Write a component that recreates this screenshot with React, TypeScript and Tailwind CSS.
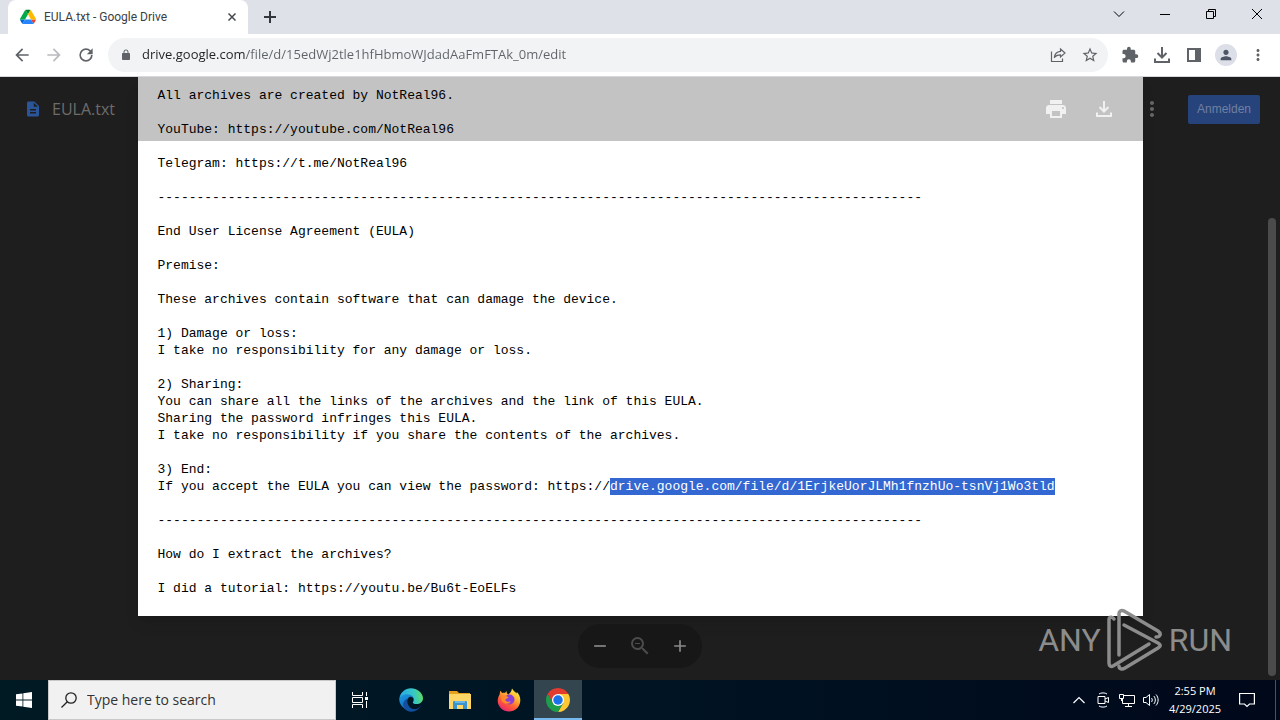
import type { ReactNode } from 'react'

const RULE = '-'.repeat(98)

const SELECTED = 'drive.google.com/file/d/1ErjkeUorJLMh1fnzhUo-tsnVj1Wo3tld'

interface Line { text: string; selected?: string }

const LINES: Line[] = [
  { text: 'All archives are created by NotReal96.' },
  { text: '' },
  { text: 'YouTube: https://youtube.com/NotReal96' },
  { text: '' },
  { text: 'Telegram: https://t.me/NotReal96' },
  { text: '' },
  { text: RULE },
  { text: '' },
  { text: 'End User License Agreement (EULA)' },
  { text: '' },
  { text: 'Premise:' },
  { text: '' },
  { text: 'These archives contain software that can damage the device.' },
  { text: '' },
  { text: '1) Damage or loss:' },
  { text: 'I take no responsibility for any damage or loss.' },
  { text: '' },
  { text: '2) Sharing:' },
  { text: 'You can share all the links of the archives and the link of this EULA.' },
  { text: 'Sharing the password infringes this EULA.' },
  { text: 'I take no responsibility if you share the contents of the archives.' },
  { text: '' },
  { text: '3) End:' },
  { text: 'If you accept the EULA you can view the password: https://', selected: SELECTED },
  { text: '' },
  { text: RULE },
  { text: '' },
  { text: 'How do I extract the archives?' },
  { text: '' },
  { text: 'I did a tutorial: https://youtu.be/Bu6t-EoELFs' },
]

interface IconProps { d: string; className?: string }

// Filled 24-unit material glyph
function Glyph({ d, className = 'size-5' }: IconProps) {
  return <svg className={className} viewBox="0 0 24 24" fill="currentColor"><path d={d} /></svg>
}

const PATHS = {
  back: 'M20 11H7.83l5.59-5.59L12 4l-8 8 8 8 1.41-1.41L7.83 13H20v-2z',
  forward: 'M12 4l-1.41 1.41L16.17 11H4v2h12.17l-5.58 5.59L12 20l8-8z',
  reload: 'M17.65 6.35A7.96 7.96 0 0012 4a8 8 0 108 8h-2a6 6 0 11-1.76-4.24L13 11h7V4l-2.35 2.35z',
  lock: 'M18 8h-1V6c0-2.76-2.24-5-5-5S7 3.24 7 6v2H6c-1.1 0-2 .9-2 2v10c0 1.1.9 2 2 2h12c1.1 0 2-.9 2-2V10c0-1.1-.9-2-2-2zM9 6c0-1.66 1.34-3 3-3s3 1.34 3 3v2H9V6z',
  star: 'M22 9.24l-7.19-.62L12 2 9.19 8.63 2 9.24l5.46 4.73L5.82 21 12 17.27 18.18 21l-1.63-7.03L22 9.24zM12 15.4l-3.76 2.27 1-4.28-3.32-2.88 4.38-.38L12 6.1l1.71 4.04 4.38.38-3.32 2.88 1 4.28L12 15.4z',
  puzzle: 'M20.5 11H19V7c0-1.1-.9-2-2-2h-4V3.5a2.5 2.5 0 00-5 0V5H4c-1.1 0-1.99.9-1.99 2v3.8H3.5a2.7 2.7 0 010 5.4H2V20c0 1.1.9 2 2 2h3.8v-1.5a2.7 2.7 0 015.4 0V22H17c1.1 0 2-.9 2-2v-4h1.5a2.5 2.5 0 000-5z',
  person: 'M12 12c2.21 0 4-1.79 4-4s-1.79-4-4-4-4 1.79-4 4 1.79 4 4 4zm0 2c-2.67 0-8 1.34-8 4v2h16v-2c0-2.66-5.33-4-8-4z',
  more: 'M12 8c1.1 0 2-.9 2-2s-.9-2-2-2-2 .9-2 2 .9 2 2 2zm0 2c-1.1 0-2 .9-2 2s.9 2 2 2 2-.9 2-2-.9-2-2-2zm0 6c-1.1 0-2 .9-2 2s.9 2 2 2 2-.9 2-2-.9-2-2-2z',
  print: 'M19 8H5c-1.66 0-3 1.34-3 3v6h4v4h12v-4h4v-6c0-1.66-1.34-3-3-3zm-3 11H8v-5h8v5zm3-7c-.55 0-1-.45-1-1s.45-1 1-1 1 .45 1 1-.45 1-1 1zm-1-9H6v4h12V3z',
  doc: 'M14 2H6c-1.1 0-2 .9-2 2v16c0 1.1.9 2 2 2h12c1.1 0 2-.9 2-2V8l-6-6zm2 16H8v-2h8v2zm0-4H8v-2h8v2zm-3-5V3.5L18.5 9H13z',
  zoomOut: 'M15.5 14h-.79l-.28-.27A6.47 6.47 0 0016 9.5 6.5 6.5 0 109.5 16c1.61 0 3.09-.59 4.23-1.57l.27.28v.79l5 4.99L20.49 19l-4.99-5zm-6 0a4.5 4.5 0 110-9 4.5 4.5 0 010 9zM7 9h5v1H7V9z',
  minus: 'M19 13H5v-2h14v2z',
  plus: 'M19 13h-6v6h-2v-6H5v-2h6V5h2v6h6v2z',
}

function IconButton({ label, className = '', children }: { label: string; className?: string; children: ReactNode }) {
  return (
    <button type="button" aria-label={label} className={`flex shrink-0 items-center justify-center ${className}`}>
      {children}
    </button>
  )
}

function DriveLogo() {
  return (
    <svg className="size-4 shrink-0" viewBox="0 -4 87.3 87.3">
      <path d="m6.6 66.85 3.85 6.65c.8 1.4 1.95 2.5 3.3 3.3l13.75-23.8h-27.5c0 1.55.4 3.1 1.2 4.5z" fill="#0066da" />
      <path d="m43.65 25-13.75-23.8c-1.35.8-2.5 1.9-3.3 3.3l-25.4 44a9.06 9.06 0 0 0 -1.2 4.5h27.5z" fill="#00ac47" />
      <path d="m73.55 76.8c1.35-.8 2.5-1.9 3.3-3.3l1.6-2.75 7.65-13.25c.8-1.4 1.2-2.95 1.2-4.5h-27.502l5.852 11.5z" fill="#ea4335" />
      <path d="m43.65 25 13.75-23.8c-1.35-.8-2.9-1.2-4.5-1.2h-18.5c-1.6 0-3.15.45-4.5 1.2z" fill="#00832d" />
      <path d="m59.8 53h-32.3l-13.75 23.8c1.35.8 2.9 1.2 4.5 1.2h50.8c1.6 0 3.15-.45 4.5-1.2z" fill="#2684fc" />
      <path d="m73.4 26.5-12.7-22c-.8-1.4-1.95-2.5-3.3-3.3l-13.75 23.8 16.15 28h27.45c0-1.55-.4-3.1-1.2-4.5z" fill="#ffba00" />
    </svg>
  )
}

function DownloadIcon({ className = 'size-5' }: { className?: string }) {
  return (
    <svg className={className} viewBox="0 0 20 20" fill="none" stroke="currentColor" strokeWidth="2">
      <path d="M10 2v10M5.5 8l4.5 4.5L14.5 8M3 13.5V17h14v-3.5" />
    </svg>
  )
}

function EdgeIcon() {
  return (
    <svg className="size-6" viewBox="0 0 24 24">
      <defs>
        <linearGradient id="edgeTop" x1="0" y1="0.5" x2="1" y2="0.4">
          <stop offset="0" stopColor="#2aa9e6" />
          <stop offset="0.6" stopColor="#35c6c8" />
          <stop offset="1" stopColor="#5fdc63" />
        </linearGradient>
        <linearGradient id="edgeBody" x1="0" y1="0" x2="0.6" y2="1">
          <stop offset="0" stopColor="#1b9de2" />
          <stop offset="1" stopColor="#1560b5" />
        </linearGradient>
      </defs>
      <path d="M0.3 11C1 4.5 6 0.2 12 0.2S24 5 24 10c0 4-3 6-6.5 6-2.8 0-4-1-3.6-1.8 1.8-2 .8-6-3-6.7C6 6.5 2 8 0.3 11z" fill="url(#edgeTop)" />
      <path d="M0.2 12C0.6 8.5 4 6.3 8 6.3c4.5 0 7 3 6.9 5.5-.2-1.7-1.7-3-3.2-3-2 0-3.8 2-3.8 5.2 0 4.5 4 8.2 9 7.6A12 12 0 0 1 .2 12z" fill="url(#edgeBody)" />
      <path d="M8.8 10.5c-1.6 4 .7 9.3 5.3 10.6 3 .7 5.6-.3 8-3.8-1.5 3-5 6.5-10 6.5-5 0-8.3-4.2-7.9-8 .3-2.7 2.5-4.8 4.6-5.3z" fill="#124f9f" />
    </svg>
  )
}

function FolderIcon() {
  return (
    <svg className="size-6" viewBox="0 0 24 24">
      <path d="M1 3h8l2 2h11v4H1z" fill="#e5a11c" />
      <path d="M1 6h22v15H1z" fill="#ffd766" />
      <path d="M5 21v-7a1 1 0 0 1 1-1h12a1 1 0 0 1 1 1v7h-4v-4H9v4z" fill="#3c94cf" />
      <path d="M7 13h10v2H7z" fill="#69b7e5" />
    </svg>
  )
}

function FirefoxIcon() {
  return (
    <svg className="size-6" viewBox="0 0 24 24">
      <defs>
        <linearGradient id="fox" x1="0.8" y1="0" x2="0.2" y2="1">
          <stop offset="0" stopColor="#fff04d" />
          <stop offset="0.35" stopColor="#ffb02e" />
          <stop offset="0.65" stopColor="#ff5a36" />
          <stop offset="1" stopColor="#e0207a" />
        </linearGradient>
      </defs>
      <path d="M15 .5c1.4 2.2 3 3.3 4.5 5 .3-.5.3-1.2.1-1.8 2.5 2.3 3.9 5.6 3.7 9C23 19 18 23.5 12 23.5S.7 19 .7 12.8c0-3 1.2-5 2-6.5l.4-3.5c.8.6 1.5 1.5 2 2.3.8-.3 1.9-.4 2.8-.2L9.5 3c0 1.5.5 2.8 1.6 3.5 1.8-.8 3.5-3.3 3.9-6z" fill="url(#fox)" />
      <circle cx="12.5" cy="11.5" r="5" fill="#8b3fd6" />
      <path d="M4.5 9c2.5-1.9 5-1.2 7.2.5-1.2.2-1.4 1-2.5 1.5-1 .4-1.3 1.3.2 2.3 1.5.9 2.9-.2 4.3.2-1 2.7-5 3-7.5 1C4.5 13 4 11 4.5 9z" fill="#ff8a2b" />
    </svg>
  )
}

function ChromeIcon() {
  return (
    <svg className="size-6" viewBox="0 0 48 48">
      <path d="M24 12h20.78A24 24 0 0 0 3.22 12L13.6 30z" fill="#e33b2e" />
      <path d="M34.39 30L24 48A24 24 0 0 0 44.78 12H24z" fill="#fcc934" />
      <path d="M13.61 30L3.22 12A24 24 0 0 0 24 48l10.39-18z" fill="#1e9e4a" />
      <circle cx="24" cy="24" r="12" fill="#fff" />
      <circle cx="24" cy="24" r="9.5" fill="#1a73e8" />
    </svg>
  )
}

function TabStrip() {
  return (
    <div className="flex h-[34px] items-stretch bg-[#dee1e8] pl-2">
      <div className="flex w-60 items-center gap-2 rounded-t-lg bg-white pr-2.5 pl-3">
        <DriveLogo />
        <span className="flex-1 truncate text-xs text-[#3c4043]">EULA.txt - Google Drive</span>
        <IconButton label="Close tab" className="size-3 text-[#45494d]">
          <svg className="size-2" viewBox="0 0 8 8" stroke="currentColor" strokeWidth="1.5"><path d="M.5.5l7 7M7.5.5l-7 7" /></svg>
        </IconButton>
      </div>
      <IconButton label="New tab" className="w-11 text-[#33373b]">
        <svg className="size-3" viewBox="0 0 12 12" stroke="currentColor" strokeWidth="2"><path d="M6 0v12M0 6h12" /></svg>
      </IconButton>
      <div className="ml-auto flex h-7 text-black">
        <IconButton label="Search tabs" className="w-[46px]">
          <svg className="size-3" viewBox="0 0 12 12" fill="none" stroke="currentColor"><path d="M1 3.5l5 5 5-5" /></svg>
        </IconButton>
        <IconButton label="Minimize" className="w-[46px]">
          <svg className="size-3" viewBox="0 0 12 12" stroke="currentColor"><path d="M1 6.5h10" /></svg>
        </IconButton>
        <IconButton label="Restore" className="w-[46px]">
          <svg className="size-3" viewBox="0 0 12 12" fill="none" stroke="currentColor"><path d="M1.5 3.5h7v7h-7zM3.5 3.5v-2h7v7h-2" /></svg>
        </IconButton>
        <IconButton label="Close window" className="w-[46px]">
          <svg className="size-3" viewBox="0 0 12 12" stroke="currentColor"><path d="M1 1l10 10M11 1L1 11" /></svg>
        </IconButton>
      </div>
    </div>
  )
}

function Toolbar() {
  return (
    <div className="flex h-[43px] items-center gap-1 border-b border-[#d6d8db] bg-white px-2 text-[#5f6368]">
      <IconButton label="Back" className="size-7"><Glyph d={PATHS.back} /></IconButton>
      <IconButton label="Forward" className="size-7 text-[#b9bbbe]"><Glyph d={PATHS.forward} /></IconButton>
      <IconButton label="Reload" className="size-7"><Glyph d={PATHS.reload} /></IconButton>
      <div className="mx-1 flex h-[34px] flex-1 items-center rounded-full bg-[#f1f3f4] pr-1 pl-3">
        <Glyph d={PATHS.lock} className="size-3 shrink-0" />
        {/* Host part is darker than the path */}
        <input
          aria-label="Address"
          defaultValue="drive.google.com/file/d/15edWj2tle1hfHbmoWJdadAaFmFTAk_0m/edit"
          className="ml-2.5 min-w-0 flex-1 bg-[linear-gradient(90deg,#202124_103px,#5f6368_103px)] bg-clip-text font-['Open_Sans',sans-serif] text-[13px] text-transparent outline-none"
        />
        <IconButton label="Share" className="size-7">
          <svg className="size-4" viewBox="0 0 16 16" fill="none" stroke="currentColor" strokeWidth="1.2">
            <path d="M1.5 4.5v10h11v-3M10.5 2l4.5 4-4.5 4V7.8c-3 0-5 1-6.2 3 .3-3.2 2.6-6 6.2-6.4z" />
          </svg>
        </IconButton>
        <IconButton label="Bookmark" className="ml-1 size-7"><Glyph d={PATHS.star} className="size-[18px]" /></IconButton>
      </div>
      <IconButton label="Extensions" className="size-7"><Glyph d={PATHS.puzzle} className="size-[18px]" /></IconButton>
      <IconButton label="Downloads" className="size-7"><DownloadIcon /></IconButton>
      <IconButton label="Side panel" className="size-7">
        <svg className="size-4" viewBox="0 0 16 16" fill="currentColor"><path d="M1 1h14v14H1zM3 3v10h6V3z" fillRule="evenodd" /></svg>
      </IconButton>
      <IconButton label="Profile" className="size-7">
        <span className="flex size-[22px] items-center justify-center rounded-full bg-[#dcdfe8] text-[#4d5566]">
          <Glyph d={PATHS.person} className="size-4" />
        </span>
      </IconButton>
      <IconButton label="Menu" className="size-7"><Glyph d={PATHS.more} className="size-[18px]" /></IconButton>
    </div>
  )
}

function Watermark() {
  return (
    <div className="absolute right-12 bottom-2 flex items-center gap-1.5 text-[32px] leading-none text-[#8c8c8c]">
      <span>ANY</span>
      <svg className="h-16 w-14" viewBox="0 0 56 64" fill="none" stroke="currentColor" strokeWidth="3.5" strokeLinejoin="round" strokeLinecap="round">
        <path d="M7 11c-2-3-5-2-5 1v43c0 3 2 4 4 3L42 36" />
        <path d="M12 47V6c0-3 2-4 5-3l34 20c4 3 2 6-2 6" />
        <path d="M17 17l34 18c3 2 3 3 0 5L18 60c-3 2-6 1-6-2" />
      </svg>
      <span>RUN</span>
    </div>
  )
}

function Viewer() {
  return (
    <main className="relative flex-1 overflow-hidden bg-[#1e1e1e]">
      {/* Top 64px of the page sit in the shade of the file bar */}
      <pre className="mx-auto max-w-[1005px] bg-[linear-gradient(#c3c3c3_64px,#fff_64px)] px-5 pt-2.5 pb-[19px] font-['Liberation_Mono',monospace] text-[13px] leading-[17px] text-black shadow-lg">
        {LINES.map((line, i) => (
          <div key={i} className="flex h-[17px]">
            <span>{line.text}</span>
            {line.selected && <mark className="bg-[#3367d1] text-white">{line.selected}</mark>}
          </div>
        ))}
      </pre>

      <header className="absolute inset-x-0 top-0 flex h-16 items-center pr-5 pl-6">
        <Glyph d={PATHS.doc} className="size-[18px] text-[#2b5599]" />
        <h1 className="ml-2.5 font-['Open_Sans',sans-serif] text-base text-[#6c6c6c]">EULA.txt</h1>
        <div className="ml-auto flex items-center gap-2 text-[#f1f1f1]">
          <IconButton label="Print" className="size-10"><Glyph d={PATHS.print} className="size-6" /></IconButton>
          <IconButton label="Download" className="size-10"><DownloadIcon /></IconButton>
          <IconButton label="More actions" className="size-10 text-[#666]"><Glyph d={PATHS.more} className="size-6" /></IconButton>
          <button type="button" className="ml-2 h-[29px] w-18 rounded-xs bg-[#26437c] font-['Liberation_Sans',sans-serif] text-xs text-[#7080a0]">
            Anmelden
          </button>
        </div>
      </header>

      <div className="absolute bottom-3 left-1/2 flex h-11 -translate-x-1/2 items-center rounded-full bg-[#171717] px-1 text-[#8a8a8a]">
        <IconButton label="Zoom out" className="h-10 w-9"><Glyph d={PATHS.minus} /></IconButton>
        <IconButton label="Reset zoom" className="h-10 w-11 text-[#4c4c4c]"><Glyph d={PATHS.zoomOut} className="size-6" /></IconButton>
        <IconButton label="Zoom in" className="h-10 w-9"><Glyph d={PATHS.plus} /></IconButton>
      </div>

      <div className="absolute right-1 bottom-1 h-[76%] w-2 rounded-full bg-[#4b4b4b]" />
      <Watermark />
    </main>
  )
}

function Taskbar() {
  return (
    <footer className="flex h-10 items-stretch bg-linear-to-r from-[#001a24] via-[#001424] to-[#00081a] font-['Open_Sans',sans-serif] text-white">
      <IconButton label="Start" className="w-12">
        <svg className="size-4" viewBox="0 0 16 16" fill="currentColor">
          <path d="M0 2.3L6.5 1.4V7.6H0zM7.3 1.3L16 0v7.6H7.3zM0 8.4h6.5v6.2L0 13.7zM7.3 8.4H16V16l-8.7-1.3z" />
        </svg>
      </IconButton>
      <label className="flex w-72 items-center border border-[#c8c8c8] bg-[#f1f1f1] pl-3 text-[#222]">
        <svg className="size-4 shrink-0" viewBox="0 0 16 16" fill="none" stroke="currentColor" strokeWidth="1.3">
          <circle cx="10" cy="6" r="5.2" />
          <path d="M6.3 9.7L.5 15.5" />
        </svg>
        <input aria-label="Search" placeholder="Type here to search" className="ml-2.5 min-w-0 flex-1 text-sm outline-none placeholder:text-[#333]" />
      </label>
      <div className="flex gap-px">
        <IconButton label="Task view" className="mr-0.5 w-12">
          <svg className="size-[18px]" viewBox="0 0 18 18" fill="none" stroke="currentColor">
            <path d="M1.5 1v3.5h10V1M1.5 17v-3.5h10V17M1.5 6.5h10v5h-10zM15.5 1v4M15.5 10v7" />
            <path d="M14 6h3v3h-3z" fill="currentColor" stroke="none" />
          </svg>
        </IconButton>
        <IconButton label="Edge" className="w-12"><EdgeIcon /></IconButton>
        <IconButton label="File Explorer" className="w-12"><FolderIcon /></IconButton>
        <IconButton label="Firefox" className="w-12"><FirefoxIcon /></IconButton>
        <IconButton label="Chrome" className="w-12 border-b-2 border-[#76b9ed] bg-[#33454f] pt-0.5"><ChromeIcon /></IconButton>
      </div>
      <div className="ml-auto flex items-stretch">
        <IconButton label="Show hidden icons" className="w-6">
          <svg className="size-3" viewBox="0 0 12 12" fill="none" stroke="currentColor" strokeWidth="1.2"><path d="M.5 9L6 3.5 11.5 9" /></svg>
        </IconButton>
        <IconButton label="Camera" className="w-6">
          <svg className="size-4" viewBox="0 0 16 16" fill="none" stroke="currentColor">
            <path d="M3 4.5h7v7H3zM10 7l3.5-1.5v5L10 9M4 2c2-1.5 6-1.5 8 0M4 14c2 1.5 6 1.5 8 0" />
          </svg>
        </IconButton>
        <IconButton label="Network" className="w-6">
          <svg className="size-4" viewBox="0 0 16 16" fill="none" stroke="currentColor">
            <path d="M5 3.5h10.5v8H3.5V7M9.5 11.5v3M6 14.5h7M.5 2.5h4v4h-4zM2.5 6.5V9" />
          </svg>
        </IconButton>
        <IconButton label="Volume" className="w-6">
          <svg className="size-4" viewBox="0 0 16 16" fill="none" stroke="currentColor">
            <path d="M.5 5.5h2.5l3.5-3v11L3 10.5H.5zM8.5 6c1 1.2 1 2.8 0 4M10.8 4c2 2.3 2 5.7 0 8M13 2.5c2.8 3 2.8 8 0 11" />
          </svg>
        </IconButton>
        <div className="flex w-16 flex-col items-center justify-center text-[11px] leading-[18px]">
          <span>2:55 PM</span>
          <span>4/29/2025</span>
        </div>
        <IconButton label="Notifications" className="w-10">
          <svg className="size-4" viewBox="0 0 16 16" fill="none" stroke="currentColor" strokeWidth="1.2"><path d="M.6 1.5h14.8v10.5H10.5L8 14.5 5.5 12H.6z" /></svg>
        </IconButton>
        <div className="mr-1 ml-2 w-px bg-[#4a5260]" />
      </div>
    </footer>
  )
}

export default function App() {
  return (
    <div className="flex h-screen flex-col overflow-hidden font-['Roboto',sans-serif]">
      <TabStrip />
      <Toolbar />
      <Viewer />
      <Taskbar />
    </div>
  )
}
